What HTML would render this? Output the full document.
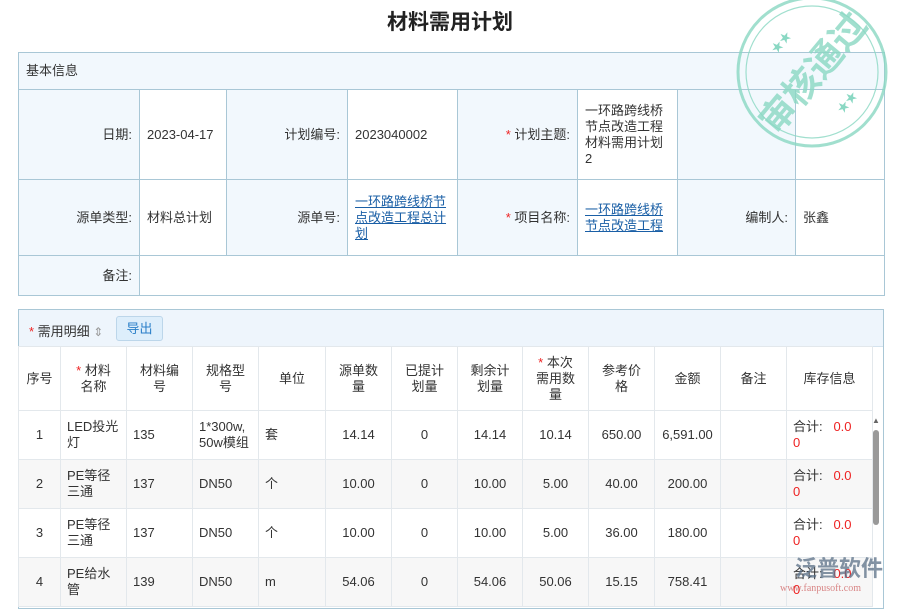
<!DOCTYPE html>
<html><head><meta charset="utf-8"><style>
*{margin:0;padding:0;box-sizing:border-box}
body{width:900px;height:600px;overflow:hidden;background:#fff;font-family:"Liberation Sans","Noto Sans CJK SC",sans-serif;font-size:13px;color:#333;position:relative}
.t{position:absolute;left:0;width:900px;top:6px;text-align:center;font-size:21px;font-weight:bold;color:#222}
table{border-collapse:collapse;position:absolute;table-layout:fixed}
td{border:1px solid #a9c7d6;padding:0 7px;line-height:16px;word-break:break-all}
#a{left:18px;top:52px;width:866px}
.l{background:#f2f8fd;text-align:right}
.r{color:#e22}
a{color:#1a5fa6;text-decoration:underline}
#p{position:absolute;left:18px;top:309px;width:866px;height:300px;border:1px solid #a9c7d6}
#bar{height:37px;background:#eef5fc;border-bottom:1px solid #d5e3ee;position:relative}
#b{left:18px;top:346px;width:854px}
#b td{border:1px solid #e3e8ec;padding:0 6px}
#b .h td{height:64px;text-align:center;padding:0 10px}
#b .d td{height:49px}
#b .d:nth-child(odd) td{background:#f7f7f7}
.c{text-align:center}
</style></head><body>
<div class="t">材料需用计划</div>
<table id="a">
<colgroup><col width="121"><col width="87"><col width="121"><col width="110"><col width="120"><col width="100"><col width="118"><col width="89"></colgroup>
<tr><td colspan="8" style="height:37px;background:#f2f8fd">基本信息</td></tr>
<tr style="height:90px"><td class="l">日期:</td><td>2023-04-17</td><td class="l">计划编号:</td><td>2023040002</td><td class="l"><span class="r">*</span> 计划主题:</td><td>一环路跨线桥节点改造工程材料需用计划2</td><td class="l"></td><td></td></tr>
<tr style="height:76px"><td class="l">源单类型:</td><td>材料总计划</td><td class="l">源单号:</td><td><a>一环路跨线桥节点改造工程总计划</a></td><td class="l"><span class="r">*</span> 项目名称:</td><td><a>一环路跨线桥节点改造工程</a></td><td class="l">编制人:</td><td>张鑫</td></tr>
<tr style="height:40px"><td class="l">备注:</td><td colspan="7"></td></tr>
</table>
<div id="p"><div id="bar">
<span style="position:absolute;left:10px;top:11px"><span class="r">*</span> 需用明细 <span style="color:#999;font-size:12px">⇕</span></span>
<span style="position:absolute;left:97px;top:6px;width:47px;height:25px;border:1px solid #bcd6ea;border-radius:3px;background:#ddeefb;color:#2a7fc8;text-align:center;line-height:23px">导出</span>
</div></div>
<table id="b">
<colgroup><col width="42"><col width="66"><col width="66"><col width="66"><col width="67"><col width="66"><col width="66"><col width="65"><col width="66"><col width="66"><col width="66"><col width="66"><col width="86"></colgroup>
<tr class="h"><td style="padding:0 3px">序号</td><td><span class="r">*</span> 材料名称</td><td>材料编号</td><td>规格型号</td><td>单位</td><td>源单数量</td><td>已提计划量</td><td>剩余计划量</td><td><span class="r">*</span> 本次需用数量</td><td>参考价格</td><td>金额</td><td>备注</td><td>库存信息</td></tr>
<tr class="d"><td class="c">1</td><td>LED投光灯</td><td>135</td><td>1*300w,50w模组</td><td>套</td><td class="c">14.14</td><td class="c">0</td><td class="c">14.14</td><td class="c">10.14</td><td class="c">650.00</td><td class="c">6,591.00</td><td></td><td>合计:&nbsp;&nbsp;&nbsp;<span class="r">0.0<br>0</span></td></tr>
<tr class="d"><td class="c">2</td><td>PE等径三通</td><td>137</td><td>DN50</td><td>个</td><td class="c">10.00</td><td class="c">0</td><td class="c">10.00</td><td class="c">5.00</td><td class="c">40.00</td><td class="c">200.00</td><td></td><td>合计:&nbsp;&nbsp;&nbsp;<span class="r">0.0<br>0</span></td></tr>
<tr class="d"><td class="c">3</td><td>PE等径三通</td><td>137</td><td>DN50</td><td>个</td><td class="c">10.00</td><td class="c">0</td><td class="c">10.00</td><td class="c">5.00</td><td class="c">36.00</td><td class="c">180.00</td><td></td><td>合计:&nbsp;&nbsp;&nbsp;<span class="r">0.0<br>0</span></td></tr>
<tr class="d"><td class="c">4</td><td>PE给水管</td><td>139</td><td>DN50</td><td>m</td><td class="c">54.06</td><td class="c">0</td><td class="c">54.06</td><td class="c">50.06</td><td class="c">15.15</td><td class="c">758.41</td><td></td><td>合计:&nbsp;&nbsp;&nbsp;<span class="r">0.0<br>0</span></td></tr>
</table>
<div style="position:absolute;left:872px;top:418px;width:7px;height:6px;color:#666;font-size:8px;line-height:6px">▲</div>
<div style="position:absolute;left:873px;top:430px;width:6px;height:95px;background:#999;border-radius:3px"></div>
<svg style="position:absolute;left:0;top:0" width="900" height="600">
<g fill="none" stroke="#8ad8c3" stroke-width="3" opacity="0.8">
<circle cx="812" cy="72" r="74"/><circle cx="812" cy="72" r="66" stroke-width="1.2"/>
</g>
<text x="812" y="86" transform="rotate(-50 812 72)" text-anchor="middle" font-size="36" font-weight="bold" fill="#8ad8c3" opacity="0.8" font-family="Noto Sans CJK SC,sans-serif">审核通过</text>
<text x="770" y="48" transform="rotate(-50 780 44)" fill="#8ad8c3" font-size="12">★★</text><text x="836" y="108" transform="rotate(-50 846 104)" fill="#8ad8c3" font-size="12">★★</text>
<text x="795" y="576" fill="#5a6f86" opacity="0.75" font-size="22" font-weight="bold" font-family="Noto Sans CJK SC,sans-serif">泛普软件</text>
<text x="780" y="591" fill="#c55" opacity="0.7" font-size="10" font-family="Liberation Serif,serif">www.fanpusoft.com</text>
</svg>
</body></html>
